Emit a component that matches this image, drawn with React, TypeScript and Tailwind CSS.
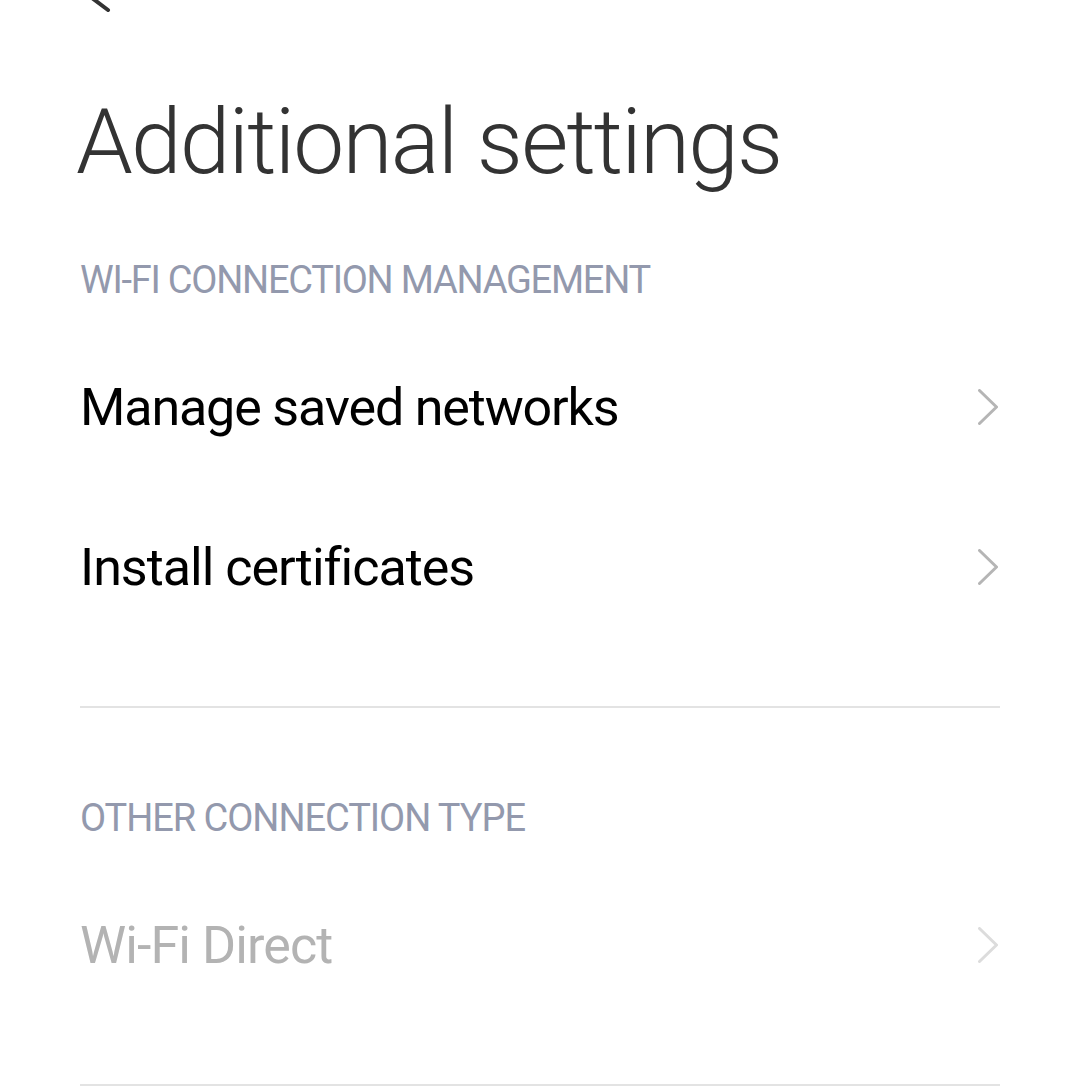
import React from "react";

function Chevron({ color }: { color: string }) {
  return (
    <svg width="20" height="36" viewBox="0 0 20 36" className="shrink-0">
      <polyline
        points="1.5,1.5 18.5,18 1.5,34.5"
        fill="none"
        stroke={color}
        strokeWidth="3"
        strokeLinecap="round"
        strokeLinejoin="round"
      />
    </svg>
  );
}

function Row({ label, textClass, chevronColor }: { label: string; textClass: string; chevronColor: string }) {
  return (
    <div className="flex h-[160px] items-center justify-between">
      <span className={textClass}>{label}</span>
      <div className="mr-[2px] -mt-[2px]">
        <Chevron color={chevronColor} />
      </div>
    </div>
  );
}

export default function App() {
  return (
    <div
      className="min-h-[1092px] w-full overflow-hidden bg-white"
      style={{ fontFamily: "Roboto, 'Noto Sans', sans-serif" }}
    >
      <div className="h-0 pl-[70px]">
        <svg width="60" height="20" viewBox="0 0 60 20">
          <line
            x1="14"
            y1="-8"
            x2="38"
            y2="10"
            stroke="#333333"
            strokeWidth="4"
            strokeLinecap="round"
          />
        </svg>
      </div>
      <div className="pl-[80px] pr-[77px]">
        <h1 className="-ml-[4px] mt-[97px] text-[91px] font-light leading-none tracking-[-1.8px] text-[#333333]">
          Additional settings
        </h1>
        <div className="mt-[73px] text-[38px] leading-none tracking-[-1.25px] text-[#9399ad]">
          WI-FI CONNECTION MANAGEMENT
        </div>
        <div className="mt-[29px]">
          <Row
            label="Manage saved networks"
            textClass="text-[52px] leading-none tracking-[-1.15px] text-black"
            chevronColor="#b5b5b5"
          />
          <Row
            label="Install certificates"
            textClass="text-[52px] leading-none tracking-[-1px] text-black"
            chevronColor="#b5b5b5"
          />
        </div>
        <div className="mt-[58px] h-[2px] bg-[#e3e3e3]" />
        <div className="mt-[91px] text-[38px] leading-none tracking-[-1.05px] text-[#9399ad]">
          OTHER CONNECTION TYPE
        </div>
        <div className="mt-[29px]">
          <Row
            label="Wi-Fi Direct"
            textClass="text-[52px] leading-none tracking-[-0.9px] text-[#b3b3b3]"
            chevronColor="#dcdcdc"
          />
        </div>
        <div className="mt-[58px] h-[2px] bg-[#e3e3e3]" />
      </div>
    </div>
  );
}
